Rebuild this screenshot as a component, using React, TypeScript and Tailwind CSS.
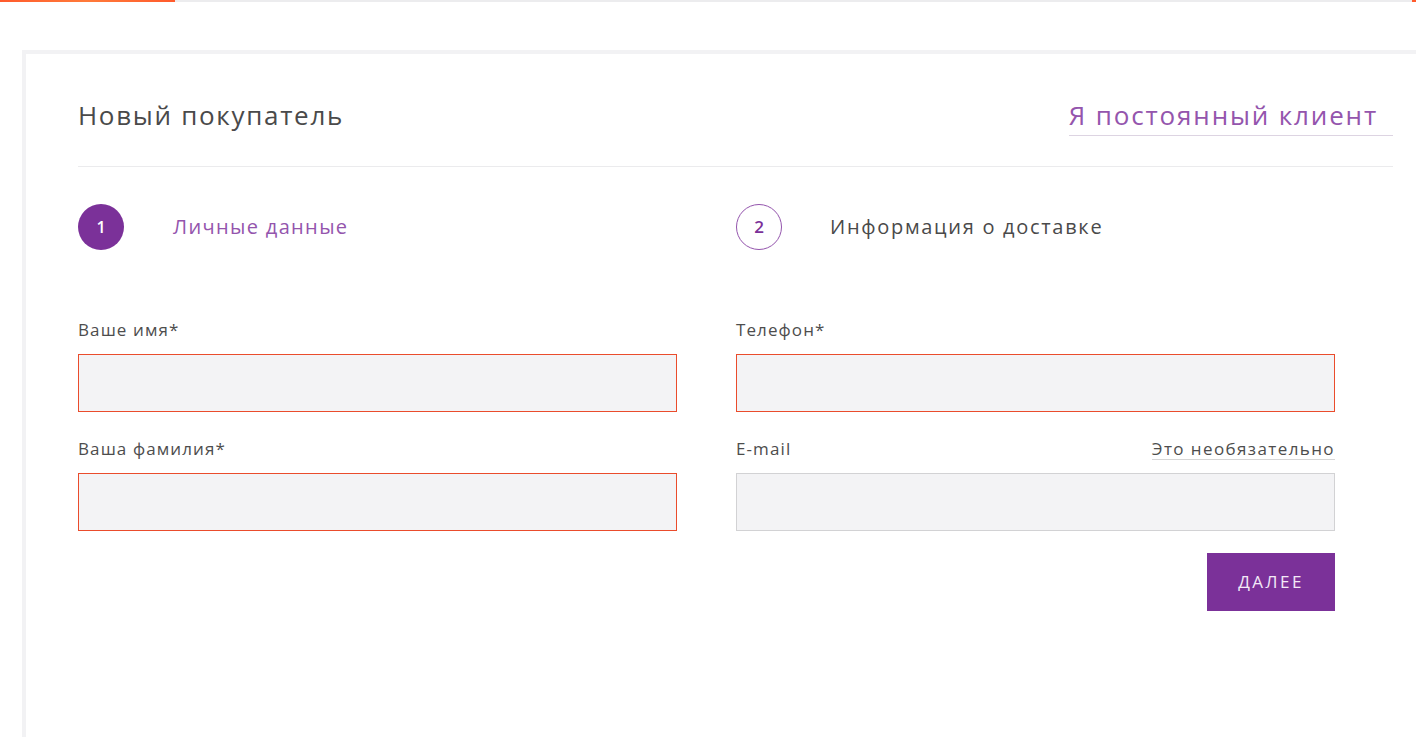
import React from 'react'

// Checkout step: new customer form

const FONT = "font-['Open_Sans','Noto_Sans',sans-serif]"

function TopStrip() {
  return (
    <div className="flex h-[2px] w-full">
      <div className="w-[175px] bg-gradient-to-r from-[#ff5a2c] via-[#ff7a3a] to-[#ff5a2c]" />
      <div className="flex-1 bg-[#ececee]" />
      <div className="w-[4px] bg-[#ff5a2c]" />
    </div>
  )
}

function Field({
  label,
  error,
  hint,
}: {
  label: string
  error?: boolean
  hint?: string
}) {
  return (
    <div className="flex flex-col">
      <div className="flex items-center justify-between h-[20px] mb-[14px]">
        <span className="text-[17px] leading-[20px] tracking-[1.1px] text-[#4d4d4d]">{label}</span>
        {hint && (
          <span className="text-[17px] leading-[20px] tracking-[1.4px] text-[#4d4d4d] border-b border-[#d6d6d6]">
            {hint}
          </span>
        )}
      </div>
      <input
        className={`h-[58px] w-full bg-[#f3f3f5] outline-none border-[1.5px] ${
          error ? 'border-[#ea4c2c]' : 'border-[#d2d2d4]'
        }`}
      />
    </div>
  )
}

export default function App() {
  return (
    <div className={`w-[1416px] h-[737px] overflow-hidden bg-white ${FONT}`}>
      <TopStrip />

      <div className="mt-[48px] ml-[22px] border-l-4 border-t-4 border-[#f2f2f4] pl-[52px] pr-[23px] pb-[140px]">
        {/* Header */}
        <div className="flex items-start justify-between pt-[45px] pb-[30px] border-b border-[#ebebed]">
          <h1 className="text-[26px] leading-[32px] tracking-[1.7px] text-[#4a4a4a] font-normal">Новый покупатель</h1>
          <a className="text-[26px] leading-[32px] tracking-[1.85px] text-[#9455ad] pb-[4px] pr-[15px] border-b border-[#ddd4e2] cursor-pointer">
            Я постоянный клиент
          </a>
        </div>

        {/* Steps */}
        <div className="grid grid-cols-2 gap-x-[59px] w-[1257px] mt-[37px]">
          <div className="flex items-center gap-[49px]">
            <div className="w-[46px] h-[46px] rounded-full bg-[#7b3199] flex items-center justify-center text-white text-[16px] font-semibold">
              1
            </div>
            <span className="text-[20px] tracking-[1.35px] text-[#9455ad]">Личные данные</span>
          </div>
          <div className="flex items-center gap-[48px]">
            <div className="w-[46px] h-[46px] rounded-full border-[1.5px] border-[#9455ad] flex items-center justify-center text-[#7b3199] text-[17px] font-semibold">
              2
            </div>
            <span className="text-[20px] tracking-[1.7px] text-[#4a4a4a]">Информация о доставке</span>
          </div>
        </div>

        {/* Form */}
        <div className="grid grid-cols-2 gap-x-[59px] gap-y-[27px] w-[1257px] mt-[70px]">
          <Field label="Ваше имя*" error />
          <Field label="Телефон*" error />
          <Field label="Ваша фамилия*" error />
          <div className="flex flex-col">
            <Field label="E-mail" hint="Это необязательно" />
            <div className="flex justify-end mt-[22px]">
              <button className="w-[128px] h-[58px] bg-[#7b3199] text-[#f3e9f7] text-[17px] tracking-[2.5px] uppercase">
                Далее
              </button>
            </div>
          </div>
        </div>
      </div>
    </div>
  )
}
